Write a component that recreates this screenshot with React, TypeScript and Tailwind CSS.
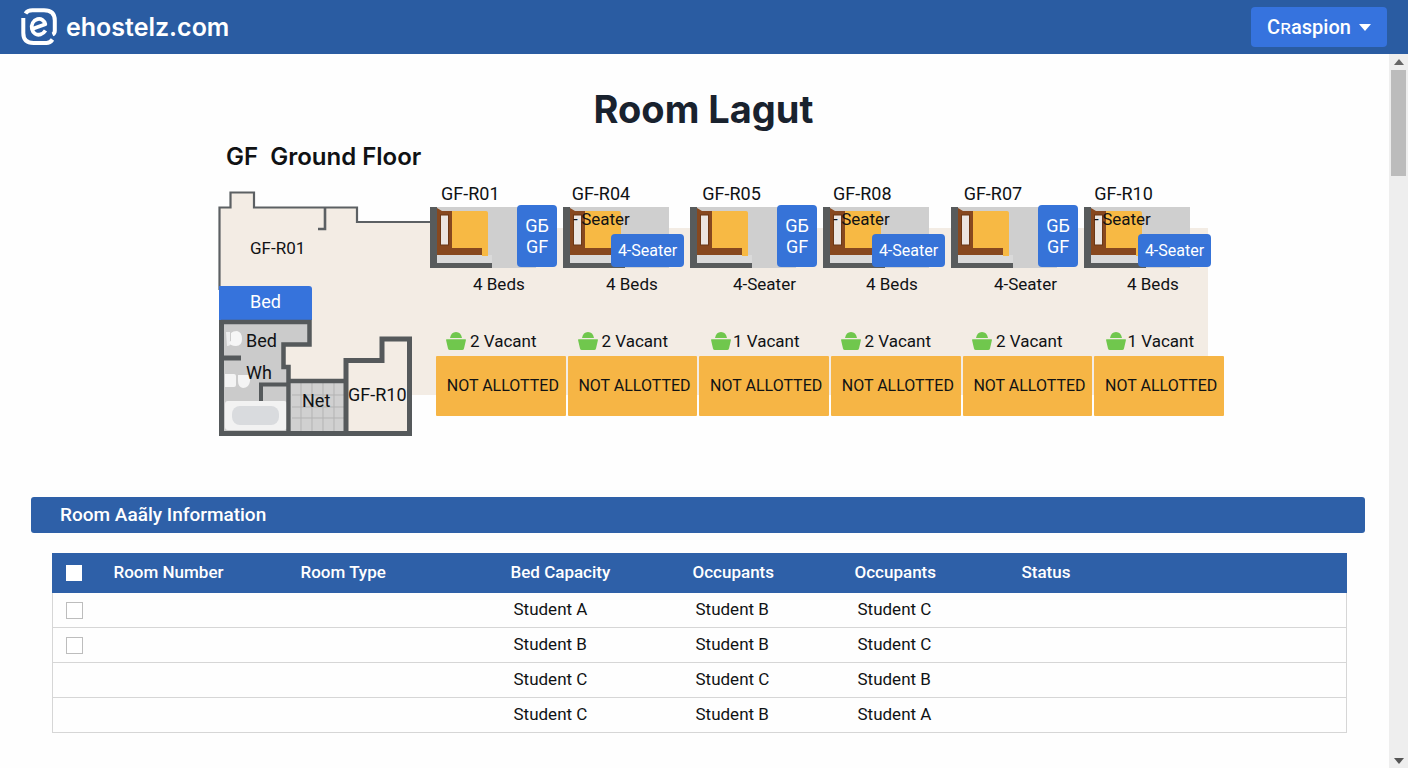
import React from "react";

type Room = {
  name: string;
  badge: "stack" | "wide";
  width: string;
  caption: string;
  vacant: number;
};

const rooms: Room[] = [
  { name: "GF-R01", badge: "stack", width: "w-[127px]", caption: "4 Beds", vacant: 2 },
  { name: "GF-R04", badge: "wide", width: "w-[121px]", caption: "4 Beds", vacant: 2 },
  { name: "GF-R05", badge: "stack", width: "w-[127px]", caption: "4-Seater", vacant: 1 },
  { name: "GF-R08", badge: "wide", width: "w-[122px]", caption: "4 Beds", vacant: 2 },
  { name: "GF-R07", badge: "stack", width: "w-[127px]", caption: "4-Seater", vacant: 2 },
  { name: "GF-R10", badge: "wide", width: "w-[127px]", caption: "4 Beds", vacant: 1 },
];

const columns = [
  { label: "Room Number", width: "w-[187px]" },
  { label: "Room Type", width: "w-[210px]" },
  { label: "Bed Capacity", width: "w-[182px]" },
  { label: "Occupants", width: "w-[162px]" },
  { label: "Occupants", width: "w-[167px]" },
  { label: "Status", width: "" },
];

const rows = [
  { check: true, students: ["Student A", "Student B", "Student C"] },
  { check: true, students: ["Student B", "Student B", "Student C"] },
  { check: false, students: ["Student C", "Student C", "Student B"] },
  { check: false, students: ["Student C", "Student B", "Student A"] },
];

function Logo() {
  return (
    <svg viewBox="0 0 36 38" className="h-[38px] w-9" fill="none" stroke="#fff" aria-hidden="true">
      <path d="M4.500 5.500Q6.500 2.300 11.500 2.300H23Q33.800 2.300 33.800 12.500V22.500Q33.800 25.500 31.500 26.500" strokeWidth="4" />
      <path d="M2.300 10V25Q2.300 35 12.500 35H25.500Q29 35 31.500 31.500" strokeWidth="4" />
      <path d="M12.500 20.500L24.300 16.300C23.200 12.200 20 10.200 16.500 11.200C12.300 12.400 10 16.500 11 21C12 25.300 15.500 27.600 19.500 26.400C21.600 25.800 23.200 24.500 24.500 22.500" strokeWidth="3.800" strokeLinejoin="round" />
    </svg>
  );
}

function FloorPlan() {
  return (
    <svg viewBox="218 184 1006 254" className="absolute left-0 top-0 h-[254px] w-[1006px]" aria-hidden="true">
      <path d="M220 208H231V193H254V208H357V222H430V228H1208V395H412V337H380V360H345V380H283V320H220Z" fill="#f3ece4" />
      <path d="M219.500 290V207.500H230.500V192.500H254V207.500H357V222H431" fill="none" stroke="#5c6063" strokeWidth="2.200" />
      <path d="M325 208V229H318" fill="none" stroke="#5c6063" strokeWidth="2.600" />
      <path d="M219 286H309Q312 286 312 289V320H219Z" fill="#3673dc" />
      <path d="M222 320H309V345H283V368H288V432H222Z" fill="#cbcbcb" />
      <rect x="291" y="383" width="53" height="48" fill="#d0d0d0" />
      <path d="M301 383V431M312 383V431M323 383V431M334 383V431M292 395H344M292 407H344M292 418H344" stroke="#b3b3b3" strokeWidth="1" />
      <path d="M346 362H382V340H409V431H346Z" fill="#f3ece4" />
      <path d="M226 332H230V341H233Q231 346 227 346Z" fill="#ededed" />
      <path d="M231 333Q233 331 237 331Q242 332 242 339Q242 346 236 346Q230 346 229 342H231Z" fill="#f6f6f6" />
      <path d="M225 374H234Q236 374 236 376V385Q236 387 234 387H225Z" fill="#f4f4f4" />
      <path d="M238 375H250V381Q249 388 243 388Q238 387 238 381Z" fill="#f4f4f4" />
      <rect x="225" y="401" width="62" height="29" rx="3" fill="#f2f2f2" />
      <rect x="232" y="406" width="47" height="19" rx="8" fill="#d9dbde" />
      <g fill="none" stroke="#55595b" strokeWidth="5">
        <path d="M221.500 320V433.500H409.500V339H382V360.500H346V433" />
        <path d="M221 322H309.500V344.500H283.500V367H288.500V433" strokeWidth="4.500" />
        <path d="M290 381H345" strokeWidth="4.500" />
        <path d="M223 358H241" />
        <path d="M261 401V384.500H290" strokeWidth="4" />
      </g>
    </svg>
  );
}

function BedDrawing() {
  return (
    <svg viewBox="0 0 106 61" className="h-[61px] w-[106px]" aria-hidden="true">
      <rect width="106" height="61" fill="#cfcfcf" />
      <rect x="7" y="48" width="55" height="8" fill="#dadada" />
      <path d="M7 1L12 4H22V41H52V48H7Z" fill="#87481f" />
      <rect x="10.500" y="8" width="8" height="30" fill="#ebe5e1" stroke="#6b3715" strokeWidth="1" />
      <path d="M22 4H56Q58 4 58 6V49H52V41H22Z" fill="#f7b944" />
      <path d="M0 0H7V56H62V61H0Z" fill="#585b5c" />
    </svg>
  );
}

function BedUnit({ room }: { room: Room }) {
  return (
    <figure className={`relative shrink-0 ${room.width}`}>
      <BedDrawing />
      {room.badge === "stack" ? (
        <div className="absolute -top-0.5 right-0 flex h-[62px] w-10 flex-col items-center justify-center rounded bg-[#3673d8] text-lg leading-[21px] text-white">
          <span>GБ</span>
          <span>GF</span>
        </div>
      ) : (
        <>
          <span className="absolute left-2.5 top-0.5 whitespace-nowrap text-[17px] leading-5">-{"\u2009"}Seater</span>
          <div className="absolute right-0 top-[27px] flex h-[33px] w-[73px] items-center justify-center whitespace-nowrap rounded bg-[#3673d8] text-base text-white">
            4-Seater
          </div>
        </>
      )}
      <figcaption className="mt-1.5 pl-[43px] text-[17px] leading-5">{room.caption}</figcaption>
    </figure>
  );
}

function VacantIcon() {
  return (
    <svg viewBox="0 0 20 18" className="h-[18px] w-5 shrink-0" fill="#70c74d" aria-hidden="true">
      <path d="M4 6Q5 0 10 0Q15 0 16 6Z" />
      <path d="M0.500 7.200H19.500Q20 7.200 19.900 8.200L18 16.500Q17.700 18 16 18H4Q2.300 18 2 16.500L0.100 8.200Q0 7.200 0.500 7.200Z" />
    </svg>
  );
}

function Scrollbar() {
  return (
    <div className="flex w-[19px] shrink-0 flex-col items-center bg-[#eeeeee]" aria-hidden="true">
      <svg viewBox="0 0 10 16" className="h-4 w-2.5" fill="#666"><path d="M0 11L5 5L10 11Z" /></svg>
      <div className="h-[106px] w-[15px] bg-[#bcbcbc]" />
      <svg viewBox="0 0 10 16" className="mt-auto h-4 w-2.5" fill="#555"><path d="M0 5L5 11L10 5Z" /></svg>
    </div>
  );
}

export default function App() {
  return (
    <div className="flex min-h-screen flex-col bg-[#fefefe] font-['Roboto',sans-serif] text-[#101214]">
      <header className="flex h-[54px] items-center justify-between bg-[#2a5ca2] pl-[21px] pr-[21px]">
        <a href="#home" className="flex items-center gap-[9px] text-white">
          <Logo />
          <span className="font-['Inter',sans-serif] text-[25px] font-semibold leading-8">ehostelz.com</span>
        </a>
        <button type="button" className="flex h-10 w-[136px] items-center justify-center gap-2 rounded bg-[#3673de] text-xl font-medium text-white">
          Cʀaspion
          <svg viewBox="0 0 12 7" className="h-[7px] w-3" fill="currentColor" aria-hidden="true"><path d="M0 0H12L6 7Z" /></svg>
        </button>
      </header>

      <div className="flex flex-1">
        <main className="min-w-0 flex-1">
          <h1 className="ml-[18px] mt-8 text-center font-['Inter',sans-serif] text-[38px] font-bold leading-[46px] text-[#19222e]">Room Lagut</h1>
          <section className="pl-[218px]">
            <h2 className="mt-[9px] whitespace-pre pl-2 font-['Inter',sans-serif] text-2xl font-semibold leading-8">GF  Ground Floor</h2>
            <div className="relative mt-[11px] h-[254px] w-[1006px]">
              <FloorPlan />
              <span className="absolute left-8 top-[54px] text-[17px] leading-5">GF-R01</span>
              <span className="absolute left-8 top-[108px] text-lg leading-5 text-white">Bed</span>
              <span className="absolute left-7 top-[147px] text-lg leading-5">Bed</span>
              <span className="absolute left-7 top-[179px] text-lg leading-5">Wh</span>
              <span className="absolute left-[84px] top-[207px] text-lg leading-5">Net</span>
              <span className="absolute left-[130px] top-[201px] text-lg leading-5">GF-R10</span>
              <div className="relative ml-[212px]">
                <ul className="ml-[11px] grid w-[784px] grid-cols-6 text-lg leading-5">
                  {rooms.map((r) => (
                    <li key={r.name}>{r.name}</li>
                  ))}
                </ul>
                <div className="mt-[3px] flex gap-1.5">
                  {rooms.map((r) => (
                    <BedUnit key={r.name} room={r} />
                  ))}
                </div>
                <ul className="ml-1.5 mt-[37px] grid w-[789px] grid-cols-6 text-[17px] leading-5">
                  {rooms.map((r) => (
                    <li key={r.name} className={r.vacant > 1 ? "flex items-center gap-1 pl-2.5" : "flex items-center gap-0.5 pl-3"}>
                      <VacantIcon />
                      {r.vacant} Vacant
                    </li>
                  ))}
                </ul>
                <ul className="ml-1.5 mt-[5px] grid w-[788px] grid-cols-6 gap-0.5 text-base">
                  {rooms.map((r) => (
                    <li key={r.name} className="flex h-[60px] items-center justify-center whitespace-nowrap rounded-[1px] bg-[#f6b545] pl-1">
                      NOT ALLOTTED
                    </li>
                  ))}
                </ul>
              </div>
            </div>
          </section>

          <section className="mt-[59px] pb-9 pl-[31px] pr-6">
            <h2 className="flex h-9 items-center rounded-[3px] bg-[#2e60a8] pl-[29px] text-[19px] font-medium text-white">Room Aaãly Information</h2>
            <div className="pl-[21px] pr-[18px] pt-5">
              <table className="w-full table-fixed border-collapse border border-[#d6d6d6] text-left text-[17px]">
                <thead>
                  <tr className="h-[39px] border border-[#2e60a8] bg-[#2e60a8] text-white">
                    <th className="w-[61px] pl-[13px]">
                      <input type="checkbox" aria-label="Select all rooms" className="block size-4 appearance-none bg-white" />
                    </th>
                    {columns.map((c, i) => (
                      <th key={i} className={`font-medium ${c.width}`}>{c.label}</th>
                    ))}
                  </tr>
                </thead>
                <tbody>
                  {rows.map((r, i) => (
                    <tr key={i} className="h-[35px] border-b border-[#d6d6d6]">
                      <td className="pl-[13px]">
                        {r.check && (
                          <input type="checkbox" aria-label={`Select row ${i + 1}`} className="block size-[17px] appearance-none border border-[#bdbdbd] bg-white" />
                        )}
                      </td>
                      <td />
                      <td />
                      {r.students.map((s, j) => (
                        <td key={j} className="pl-[3px]">{s}</td>
                      ))}
                      <td />
                    </tr>
                  ))}
                </tbody>
              </table>
            </div>
          </section>
        </main>
        <Scrollbar />
      </div>
    </div>
  );
}
